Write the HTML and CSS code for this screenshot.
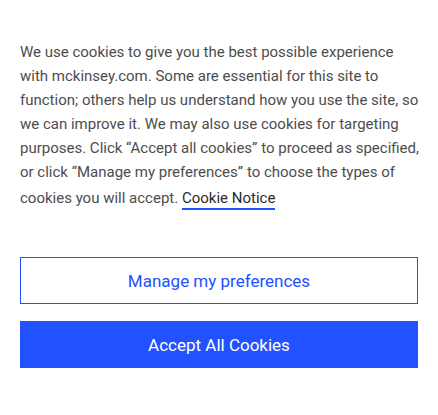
FILE: index.html
```html
<!DOCTYPE html>
<html>
<head>
<meta charset="utf-8">
<link rel="stylesheet" href="styles.css">
</head>
<body>
<div class="banner">
  <p class="text">We use cookies to give you the best possible experience with mckinsey.com. Some are essential for this site to function; others help us understand how you use the site, so we can improve it. We may also use cookies for targeting purposes. Click “Accept all cookies” to proceed as specified, or click “Manage my preferences” to choose the types of cookies you will accept. <a class="link" href="#">Cookie Notice</a></p>
  <div class="actions">
    <button class="btn btn-outline">Manage my preferences</button>
    <button class="btn btn-solid">Accept All Cookies</button>
  </div>
</div>
</body>
</html>
```
FILE: styles.css
```css
html, body {
  margin: 0;
  padding: 0;
  background: #fff;
}
.banner {
  padding: 40px 20px 0 20px;
  font-family: Roboto, "Liberation Sans", sans-serif;
}
.text {
  margin: 0 -6px 0 0;
  font-size: 15px;
  line-height: 24px;
  color: #4d4d4d;
}
.link {
  display: inline-block;
  margin-top: 4px;
  line-height: 20px;
  color: #2b2b2b;
  text-decoration: none;
  border-bottom: 2px solid #2251ff;
}
.actions {
  display: flex;
  flex-direction: column;
  gap: 17px;
  margin-top: 47px;
}
.btn {
  height: 47px;
  font-family: Roboto, "Liberation Sans", sans-serif;
  font-size: 17px;
  cursor: pointer;
  border-radius: 0;
}
.btn-outline {
  background: #fff;
  border: 1px solid #2251ff;
  color: #2251ff;
}
.btn-solid {
  background: #2251ff;
  border: 1px solid #2251ff;
  color: #fff;
}
```
